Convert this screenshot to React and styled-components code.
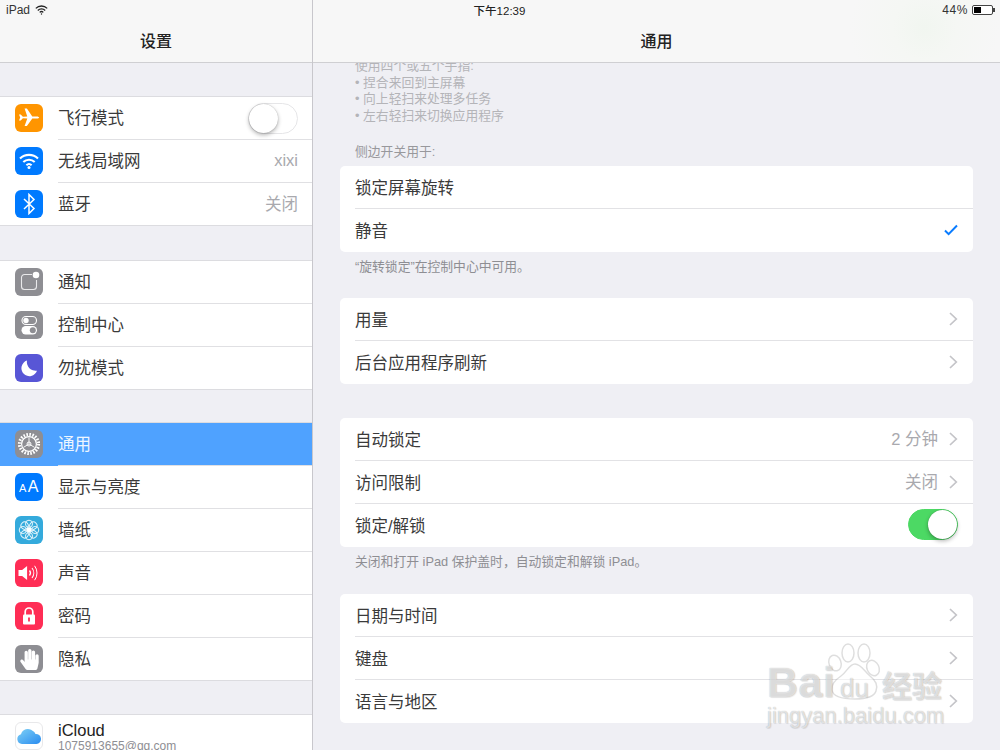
import React from 'react';
import styled, { createGlobalStyle } from 'styled-components';
import { FaHandPaper } from 'react-icons/fa';

const Global = createGlobalStyle`
  html, body { margin: 0; padding: 0; background: #efeff4; }
  body { font-family: "Liberation Sans", "Noto Sans CJK SC", sans-serif; color: #333; overflow: hidden; }
  * { box-sizing: border-box; }
`;

const Screen = styled.div`
  position: relative;
  width: 1000px;
  height: 750px;
  display: flex;
  overflow: hidden;
  background: #efeff4;
`;

const StatusBar = styled.div`
  position: absolute;
  top: 0;
  left: 0;
  right: 0;
  height: 20px;
  z-index: 3;
  padding: 0 7px 0 6px;
  display: grid;
  grid-template-columns: 1fr auto 1fr;
  align-items: center;
  font-size: 12px;
  color: #333;
`;

const StatusLeft = styled.div`
  display: flex;
  align-items: center;
  gap: 5px;
`;

const StatusTime = styled.div`
  font-weight: 500;
  font-size: 11.5px;
  color: #222;
`;

const StatusRight = styled.div`
  display: flex;
  justify-content: flex-end;
  align-items: center;
  gap: 4px;
  letter-spacing: 0.6px;
`;

const Battery = styled.div`
  position: relative;
  width: 21px;
  height: 10px;
  border: 1px solid #444;
  border-radius: 2px;
  padding: 1px;
  background: #fff;
  &::before {
    content: "";
    display: block;
    width: 44%;
    height: 100%;
    background: #000;
  }
  &::after {
    content: "";
    position: absolute;
    right: -3px;
    top: 2px;
    width: 2px;
    height: 4px;
    background: #444;
  }
`;

const Sidebar = styled.aside`
  width: 313px;
  height: 750px;
  flex: none;
  border-right: 1px solid #c8c7cc;
  display: flex;
  flex-direction: column;
`;

const NavBar = styled.header`
  flex: none;
  height: 63px;
  padding-top: 18px;
  display: flex;
  align-items: center;
  justify-content: center;
  background: ${p => p.$tinted
    ? 'radial-gradient(circle at 89% 45%, #f1f6f0 0, #f5f7f4 32px, #f7f7f7 75px)'
    : '#f7f7f7'};
  border-bottom: 1px solid #cfcfd2;
  font-size: 16px;
  font-weight: 500;
  color: #222;
  position: relative;
  z-index: 2;
`;

const Group = styled.section`
  margin-top: ${p => p.$top || 33}px;
  background: #fff;
  border-top: 1px solid #dcdce0;
`;

const Row = styled.div`
  position: relative;
  height: 43px;
  display: flex;
  align-items: center;
  padding: 0 14px 0 15px;
  gap: 15px;
  font-size: 16.5px;
  color: ${p => (p.$active ? '#eef6ff' : '#3a3a3a')};
  background: ${p => (p.$active ? '#4fa2ff' : '#fff')};
  border-bottom: 1px solid ${p => (p.$last ? '#dcdce0' : 'transparent')};
  &::after {
    content: "";
    display: ${p => (p.$last ? 'none' : 'block')};
    position: absolute;
    left: 58px;
    right: 0;
    bottom: -1px;
    height: 1px;
    background: #e0e0e3;
  }
`;

const IconTile = styled.div`
  width: 28px;
  height: 28px;
  flex: none;
  border-radius: 6px;
  background: ${p => p.$bg};
  border: ${p => (p.$outlined ? '1px solid #e8e8ea' : 'none')};
  display: flex;
  align-items: center;
  justify-content: center;
  color: #fff;
  svg { display: block; }
`;

const AaGlyph = styled.span`
  font-family: "Liberation Sans", sans-serif;
  font-size: 16px;
  letter-spacing: 0.5px;
  line-height: 1;
  small { font-size: 11px; margin-right: 1px; }
`;

const RowLabel = styled.div`
  flex: 1;
  min-width: 0;
  padding-bottom: 2px;
`;

const StackedLabel = styled.div`
  flex: 1;
  padding-top: 1px;
  font-size: 16.5px;
  line-height: 18px;
  color: #222;
  small {
    display: block;
    font-size: 12px;
    line-height: 14px;
    color: #8e8e93;
  }
`;

const Value = styled.span`
  color: #a9a9ae;
  font-size: 16.5px;
  padding-bottom: 2px;
`;

const Toggle = styled.div`
  position: relative;
  width: 50px;
  height: 31px;
  border-radius: 16px;
  background: ${p => (p.$on ? '#4cd964' : '#fff')};
  border: 1px solid ${p => (p.$on ? '#4cd964' : '#e6e6e8')};
  &::after {
    content: "";
    position: absolute;
    top: 0;
    ${p => (p.$on ? 'right: 0;' : 'left: 0;')}
    width: 29px;
    height: 29px;
    border-radius: 50%;
    background: #fff;
    box-shadow: 0 2px 4px rgba(0, 0, 0, 0.3), 0 0 1px rgba(0, 0, 0, 0.3);
  }
`;

const Main = styled.main`
  flex: 1;
  height: 750px;
  display: flex;
  flex-direction: column;
  min-width: 0;
`;

const Scroller = styled.div`
  flex: 1;
  overflow: hidden;
  padding: 0 27px;
`;

const Hint = styled.div`
  margin: ${p => p.$margin || '0'};
  padding-left: 15px;
  font-size: 12.8px;
  line-height: 16.6px;
  color: ${p => p.$color || '#a2a2a6'};
`;

const Card = styled.section`
  background: #fff;
  border-radius: 5px;
  margin-top: ${p => p.$top || 0}px;
  overflow: hidden;
`;

const CardRow = styled.div`
  position: relative;
  height: 43px;
  display: flex;
  align-items: center;
  justify-content: space-between;
  padding: 0 15px 1px;
  font-size: 16.5px;
  color: #3a3a3a;
  &:not(:last-child)::after {
    content: "";
    position: absolute;
    left: 15px;
    right: 0;
    bottom: 0;
    height: 1px;
    background: #e2e2e5;
  }
`;

const Trailing = styled.div`
  display: flex;
  align-items: center;
  gap: 11px;
`;

const Watermark = styled.div`
  position: absolute;
  left: 766px;
  top: 640px;
  width: 190px;
  height: 92px;
  z-index: 4;
  pointer-events: none;
  color: rgba(255, 255, 255, 0.65);
  text-shadow: 0 0 1px rgba(0, 0, 0, 0.32), 1px 1px 1px rgba(0, 0, 0, 0.08);
  font-family: "Liberation Sans", sans-serif;
  svg { position: absolute; left: 0; top: 0; }
`;

const WatermarkBai = styled.span`
  position: absolute;
  left: 1px;
  top: 18px;
  font-size: 43px;
  font-weight: 700;
  line-height: 48px;
  letter-spacing: 0.5px;
`;

const WatermarkDu = styled.span`
  position: absolute;
  left: 74px;
  top: 33px;
  font-size: 26px;
  line-height: 30px;
`;

const WatermarkCn = styled.span`
  position: absolute;
  left: 116px;
  top: 26px;
  font-family: "Noto Sans CJK SC", sans-serif;
  font-size: 30px;
  font-weight: 700;
  line-height: 36px;
`;

const WatermarkUrl = styled.span`
  position: absolute;
  left: 1px;
  top: 62px;
  font-size: 22px;
  line-height: 28px;
  white-space: nowrap;
`;

const Chevron = () => (
  <svg width="9" height="14" viewBox="0 0 9 14">
    <path d="M1 1l6.300 6L1 13" fill="none" stroke="#c4c4c8" strokeWidth="1.700" />
  </svg>
);

const Check = () => (
  <svg width="14" height="12" viewBox="0 0 14 12">
    <path d="M1 6.500l3.600 3.600L13 1.500" fill="none" stroke="#0a7cff" strokeWidth="2" />
  </svg>
);

const StatusWifi = () => (
  <svg width="13" height="10" viewBox="0 0 13 10" fill="none" stroke="#222" strokeWidth="1.300">
    <path d="M.8 3.400a8 8 0 0 1 11.400 0" />
    <path d="M2.800 5.500a5.200 5.200 0 0 1 7.400 0" />
    <path d="M4.700 7.400a2.600 2.600 0 0 1 3.600 0" />
    <circle cx="6.500" cy="9" r=".7" fill="#222" stroke="none" />
  </svg>
);

const Plane = () => (
  <svg width="22" height="22" viewBox="0 0 22 22" fill="#fff">
    <path d="M1 9.600h1.700l2.200 2.200 4.400-.2L6.600 3.400h2.300l5.400 8.100 4.500-.1c1.300 0 2.400.7 2.400 1.100s-1.100 1.100-2.400 1.100l-4.500-.1-5.400 7.600H6.600l2.700-7.600-4.400-.2-2.200 2.200H1l1.200-3z" transform="translate(0 -2)" />
  </svg>
);

const WifiIcon = () => (
  <svg width="22" height="18" viewBox="0 0 22 18" fill="none" stroke="#fff" strokeWidth="2.100">
    <path d="M2 6.500a13 13 0 0 1 18 0" />
    <path d="M5.300 10a8.200 8.200 0 0 1 11.400 0" />
    <path d="M8.400 13.200a3.800 3.800 0 0 1 5.200 0" />
    <circle cx="11" cy="15.600" r="1.500" fill="#fff" stroke="none" />
  </svg>
);

const BluetoothIcon = () => (
  <svg width="14" height="22" viewBox="0 0 14 22" fill="none" stroke="#fff" strokeWidth="1.500">
    <path d="M2 6l10 9.500L7 20.500V1.500l5 5L2 16" />
  </svg>
);

const BellTile = () => (
  <svg width="28" height="28" viewBox="0 0 28 28">
    <path d="M17 6.500H9.500a3 3 0 0 0-3 3v9a3 3 0 0 0 3 3h9a3 3 0 0 0 3-3V12" fill="none" stroke="#e9e9eb" strokeWidth="1.100" />
    <circle cx="21" cy="7" r="3.300" fill="#fff" />
  </svg>
);

const SwitchesIcon = () => (
  <svg width="28" height="28" viewBox="0 0 28 28">
    <rect x="7" y="5.500" width="14.500" height="8" rx="4" fill="none" stroke="#fff" strokeWidth="1.100" />
    <circle cx="11" cy="9.500" r="2.700" fill="#fff" />
    <rect x="6.500" y="15" width="15.500" height="8.500" rx="4.200" fill="#fff" />
    <circle cx="17.800" cy="19.200" r="3" fill="#8e8e93" />
  </svg>
);

const MoonIcon = () => (
  <svg width="22" height="22" viewBox="0 0 22 22">
    <path d="M9 3.500a8 8 0 1 0 10 10.200A8.800 8.800 0 0 1 9 3.500z" fill="#fff" />
  </svg>
);

const GearIcon = () => (
  <svg width="26" height="26" viewBox="0 0 26 26" fill="none" stroke="#fff">
    <circle cx="13" cy="13" r="9.600" strokeWidth="3" strokeDasharray="1.600 1.420" />
    <circle cx="13" cy="13" r="7.400" strokeWidth="1.200" />
    <path d="M13 13V6.500M13 13l-5.600 3.400M13 13l5.600 3.400" strokeWidth=".9" />
    <circle cx="13" cy="13" r="2" strokeWidth="1" />
  </svg>
);

const petals = [0, 45, 90, 135, 180, 225, 270, 315];
const FlowerIcon = () => (
  <svg width="24" height="24" viewBox="0 0 24 24" fill="none" stroke="#e5f5fb" strokeWidth="1">
    {petals.map(a => (
      <circle key={a} cx="12" cy="5.800" r="3.600" transform={`rotate(${a} 12 12)`} />
    ))}
    <circle cx="12" cy="12" r="2.400" fill="#fff" stroke="none" />
  </svg>
);

const SpeakerIcon = () => (
  <svg width="24" height="20" viewBox="0 0 24 20" fill="none" stroke="#fff">
    <path d="M1.500 7h3.600l5-4v14l-5-4H1.500z" fill="#fff" stroke="none" />
    <path d="M12.500 7.500a4 4 0 0 1 0 5" strokeWidth="1.300" />
    <path d="M15 5a8 8 0 0 1 0 10" strokeWidth="1.100" />
    <path d="M17.600 2.800a12 12 0 0 1 0 14.400" strokeWidth="1" />
  </svg>
);

const LockIcon = () => (
  <svg width="16" height="20" viewBox="0 0 16 20">
    <path d="M4.200 9V5.800a3.800 3.800 0 0 1 7.600 0V9" fill="none" stroke="#fff" strokeWidth="1.700" />
    <rect x="2" y="8.500" width="12" height="10" rx="1" fill="#fff" />
    <rect x="7.100" y="11.500" width="1.800" height="4" fill="#ff2d55" />
  </svg>
);

const CloudIcon = () => (
  <svg width="26" height="18" viewBox="0 0 26 18">
    <defs>
      <linearGradient id="cloud" x1="0" y1="0" x2="1" y2="1">
        <stop offset="0" stopColor="#7ed0f5" />
        <stop offset="1" stopColor="#2a8cf0" />
      </linearGradient>
    </defs>
    <path d="M6 17a5 5 0 0 1-1-9.800 7 7 0 0 1 11.500-3.400 5.500 5.500 0 0 1 3 3.200A5 5 0 0 1 20.500 17z" fill="url(#cloud)" />
  </svg>
);

const groups = [
  { top: 33, rows: [
    { label: '飞行模式', bg: '#ff9500', icon: <Plane />, toggle: true },
    { label: '无线局域网', bg: '#007aff', icon: <WifiIcon />, value: 'xixi' },
    { label: '蓝牙', bg: '#007aff', icon: <BluetoothIcon />, value: '关闭' },
  ] },
  { top: 34, rows: [
    { label: '通知', bg: '#8e8e93', icon: <BellTile /> },
    { label: '控制中心', bg: '#8e8e93', icon: <SwitchesIcon /> },
    { label: '勿扰模式', bg: '#5856d6', icon: <MoonIcon /> },
  ] },
  { top: 32, rows: [
    { label: '通用', bg: '#8e8e93', icon: <GearIcon />, active: true },
    { label: '显示与亮度', bg: '#007aff', icon: <AaGlyph><small>A</small>A</AaGlyph> },
    { label: '墙纸', bg: '#34aadc', icon: <FlowerIcon /> },
    { label: '声音', bg: '#ff2d55', icon: <SpeakerIcon /> },
    { label: '密码', bg: '#ff2d55', icon: <LockIcon /> },
    { label: '隐私', bg: '#8e8e93', icon: <FaHandPaper size={21} /> },
  ] },
];

const cards = [
  { top: 0, rows: [
    { label: '锁定屏幕旋转' },
    { label: '静音', check: true },
  ], note: '“旋转锁定”在控制中心中可用。' },
  { top: 22.4, rows: [
    { label: '用量', more: true },
    { label: '后台应用程序刷新', more: true },
  ] },
  { top: 34, rows: [
    { label: '自动锁定', value: '2 分钟', more: true },
    { label: '访问限制', value: '关闭', more: true },
    { label: '锁定/解锁', toggle: true },
  ], note: '关闭和打开 iPad 保护盖时，自动锁定和解锁 iPad。' },
  { top: 23.4, rows: [
    { label: '日期与时间', more: true },
    { label: '键盘', more: true },
    { label: '语言与地区', more: true },
  ] },
];

const App = () => (
  <Screen>
    <Global />
    <StatusBar>
      <StatusLeft>iPad <StatusWifi /></StatusLeft>
      <StatusTime>下午12:39</StatusTime>
      <StatusRight>44% <Battery /></StatusRight>
    </StatusBar>

    <Sidebar>
      <NavBar>设置</NavBar>
      {groups.map(group => (
        <Group key={group.rows[0].label} $top={group.top}>
          {group.rows.map((row, i) => (
            <Row key={row.label} $active={row.active} $last={i === group.rows.length - 1}>
              <IconTile $bg={row.bg}>{row.icon}</IconTile>
              <RowLabel>{row.label}</RowLabel>
              {row.value && <Value>{row.value}</Value>}
              {row.toggle && <Toggle />}
            </Row>
          ))}
        </Group>
      ))}
      <Group $top={33}>
        <Row>
          <IconTile $bg="#fff" $outlined><CloudIcon /></IconTile>
          <StackedLabel>iCloud<small>1075913655@qq.com</small></StackedLabel>
        </Row>
      </Group>
    </Sidebar>

    <Main>
      <NavBar $tinted>通用</NavBar>
      <Scroller>
        <Hint $margin="-5px 0 0" $color="#b4b4b8">
          使用四个或五个手指:<br />
          • 捏合来回到主屏幕<br />
          • 向上轻扫来处理多任务<br />
          • 左右轻扫来切换应用程序
        </Hint>
        <Hint $margin="20px 0 5px" $color="#98989c">侧边开关用于:</Hint>
        {cards.map(card => (
          <React.Fragment key={card.rows[0].label}>
            <Card $top={card.top}>
              {card.rows.map(row => (
                <CardRow key={row.label}>
                  {row.label}
                  <Trailing>
                    {row.value && <Value>{row.value}</Value>}
                    {row.more && <Chevron />}
                    {row.check && <Check />}
                    {row.toggle && <Toggle $on />}
                  </Trailing>
                </CardRow>
              ))}
            </Card>
            {card.note && <Hint $margin="7px 0 0" $color="#8e8e93">{card.note}</Hint>}
          </React.Fragment>
        ))}
      </Scroller>
    </Main>

    <Watermark>
      <svg width="190" height="70" viewBox="0 0 190 70" fill="rgba(255,255,255,.5)" stroke="rgba(0,0,0,.13)" strokeWidth="1.500">
        <ellipse cx="69" cy="23" rx="6" ry="8" transform="rotate(-20 69 23)" />
        <ellipse cx="82" cy="13" rx="6" ry="9" />
        <ellipse cx="98" cy="13" rx="6" ry="9" />
        <ellipse cx="107" cy="28" rx="6" ry="8" transform="rotate(-25 107 28)" />
        <path d="M89 24c6 0 9 7 15 12 6 5 8 9 6 15-2 6-9 8-21 8s-22-2-23-9c-1-6 3-10 9-14 6-4 8-12 14-12z" />
      </svg>
      <WatermarkBai>Bai</WatermarkBai>
      <WatermarkDu>du</WatermarkDu>
      <WatermarkCn>经验</WatermarkCn>
      <WatermarkUrl>jingyan.baidu.com</WatermarkUrl>
    </Watermark>
  </Screen>
);

export default App;
